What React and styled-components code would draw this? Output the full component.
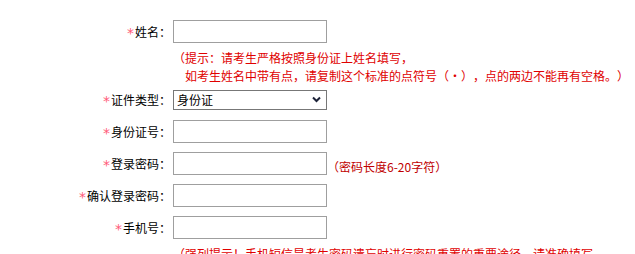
import React from "react";
import styled, { createGlobalStyle } from "styled-components";

const GlobalStyle = createGlobalStyle`
  html, body {
    margin: 0;
    padding: 0;
    background: #fff;
  }
  body {
    font-family: "Noto Sans CJK SC", "Liberation Sans", sans-serif;
    font-size: 12px;
    color: #000;
    text-spacing-trim: space-all;
  }
`;

const Form = styled.div`
  display: flex;
  flex-direction: column;
  padding-top: 20px;
  width: 635px;
  height: 254px;
  overflow: hidden;
`;

const Row = styled.div`
  display: grid;
  grid-template-columns: 171px auto;
  column-gap: 2px;
  align-items: center;
  height: 23px;
  margin-bottom: 9px;
`;

const Label = styled.label`
  display: flex;
  justify-content: flex-end;
  align-items: center;
  font-size: 12px;
  line-height: 23px;
  white-space: nowrap;
`;

const Star = styled.span`
  color: #ff5a78;
  font-family: "DejaVu Sans", sans-serif;
  font-size: 14px;
  line-height: 1;
  margin-right: 1px;
  position: relative;
  top: 1px;
`;

const Field = styled.div`
  display: flex;
  align-items: center;
`;

const TextInput = styled.input`
  box-sizing: border-box;
  width: 154px;
  height: 23px;
  margin: 0;
  padding: 0 3px;
  border: 1px solid #9f9f9f;
  background: #fff;
  font-size: 12px;
  outline: none;
`;

const SelectBox = styled.div`
  position: relative;
  width: 154px;
  height: 20px;
`;

const Select = styled.select`
  box-sizing: border-box;
  width: 154px;
  height: 20px;
  margin: 0;
  padding: 0 0 0 3px;
  border: 1px solid #777;
  border-radius: 0;
  background: #fff;
  appearance: none;
  font-family: "Noto Sans CJK SC", sans-serif;
  font-size: 12px;
  color: #000;
  outline: none;
`;

const Chevron = styled.svg`
  position: absolute;
  right: 6px;
  top: 6px;
  pointer-events: none;
`;

const Hint = styled.div`
  margin: -3px 0 3px 173px;
  color: #e00000;
  font-size: 12px;
  line-height: 18px;
  white-space: nowrap;
`;

const HintLine = styled.div`
  padding-left: ${(p) => (p.$indent ? "12px" : "0")};
`;

const Dot = styled.span`
  display: inline-block;
  width: 12px;
  text-align: center;
`;

const SideHint = styled.span`
  color: #c00000;
  font-size: 12px;
  margin-top: 6px;
  white-space: nowrap;
`;

const fields = [
  { label: "身份证号", name: "idno" },
  { label: "登录密码", name: "pwd", type: "password", hint: "（密码长度6-20字符）" },
  { label: "确认登录密码", name: "pwd2", type: "password" },
  { label: "手机号", name: "mobile" },
];

const App = () => {
  return (
    <>
      <GlobalStyle />
      <Form>
        <Row>
          <Label><Star>*</Star>姓名：</Label>
          <TextInput type="text" name="name" />
        </Row>
        <Hint>
          <HintLine>（提示：请考生严格按照身份证上姓名填写，</HintLine>
          <HintLine $indent>
            如考生姓名中带有点，请复制这个标准的点符号（<Dot>·</Dot>），点的两边不能再有空格。）
          </HintLine>
        </Hint>
        <Row>
          <Label><Star>*</Star>证件类型：</Label>
          <SelectBox>
            <Select defaultValue="sfz">
              <option value="sfz">身份证</option>
            </Select>
            <Chevron width="9" height="7" viewBox="0 0 9 7">
              <path d="M1 1.5 L4.5 5 L8 1.5" fill="none" stroke="#1c2238" strokeWidth="2" />
            </Chevron>
          </SelectBox>
        </Row>
        {fields.map((f) => (
          <Row key={f.name}>
            <Label><Star>*</Star>{f.label}：</Label>
            <Field>
              <TextInput type={f.type || "text"} name={f.name} />
              {f.hint && <SideHint>{f.hint}</SideHint>}
            </Field>
          </Row>
        ))}
        <Hint>
          <HintLine>（强列提示！手机短信是考生密码遗忘时进行密码重置的重要途径，请准确填写，</HintLine>
        </Hint>
      </Form>
    </>
  );
};

export default App;
